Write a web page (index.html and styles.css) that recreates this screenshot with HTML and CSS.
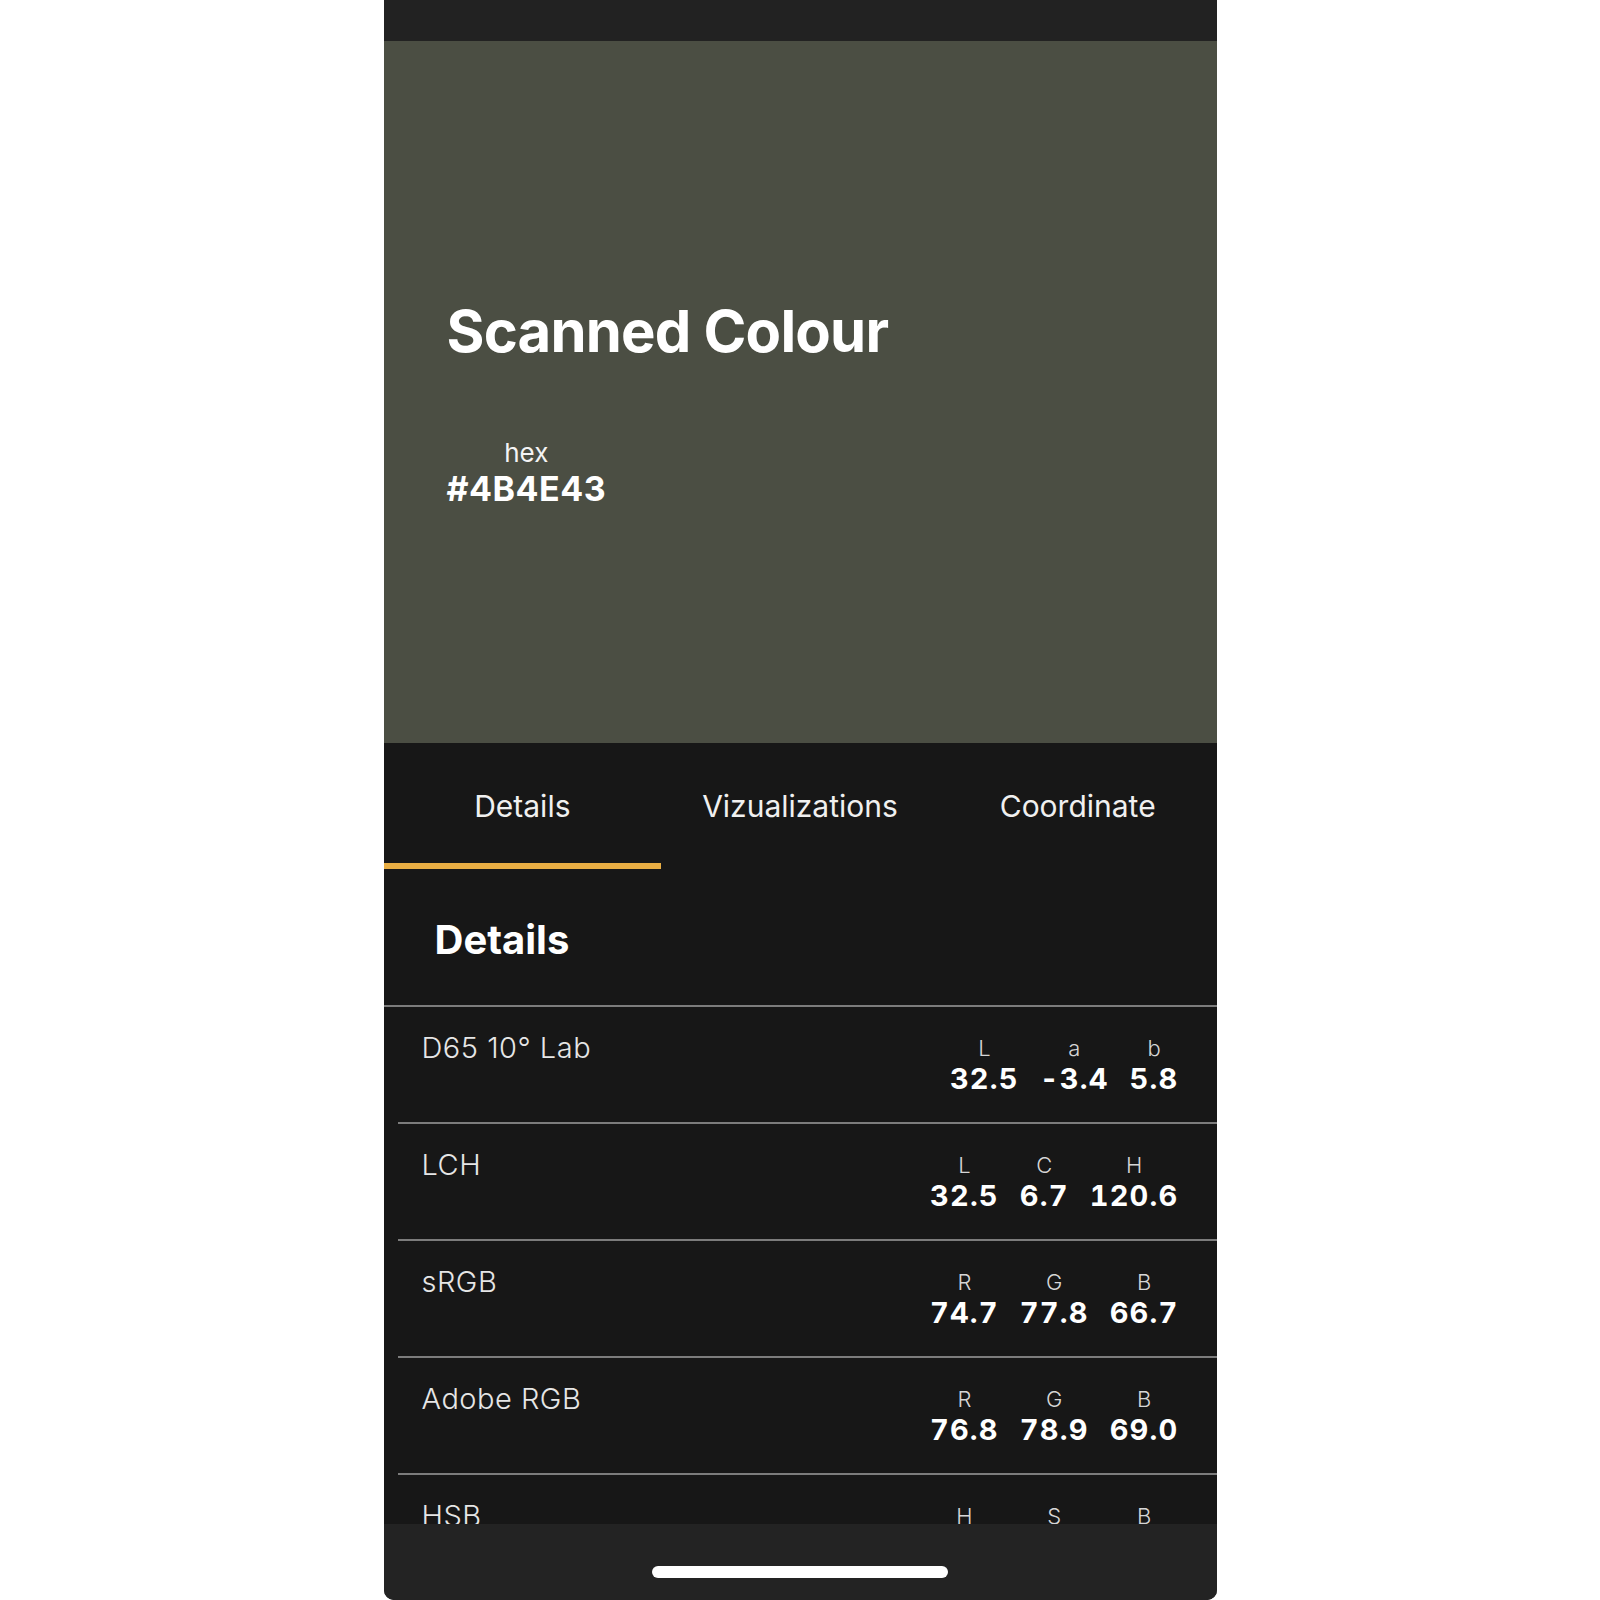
FILE: index.html
```html
<!DOCTYPE html>
<html lang="en">
<head>
<meta charset="utf-8">
<title>Scanned Colour</title>
<link rel="stylesheet" href="styles.css">
</head>
<body>
<div class="phone">
  <div class="statusbar"></div>
  <section class="swatch">
    <h1 class="title">Scanned Colour</h1>
    <div class="hex">
      <span class="hex-label">hex</span>
      <span class="hex-value">#4B4E43</span>
    </div>
  </section>
  <nav class="tabs">
    <div class="tab active">Details</div>
    <div class="tab">Vizualizations</div>
    <div class="tab">Coordinate</div>
  </nav>
  <div class="heading"><h2>Details</h2></div>
  <div class="rows">
    <div class="row">
      <div class="row-label">D65 10° Lab</div>
      <div class="vals">
        <div class="val"><span class="k">L</span><span class="v">32.5</span></div>
        <div class="val"><span class="k">a</span><span class="v">-3.4</span></div>
        <div class="val"><span class="k">b</span><span class="v">5.8</span></div>
      </div>
    </div>
    <div class="row">
      <div class="row-label">LCH</div>
      <div class="vals">
        <div class="val"><span class="k">L</span><span class="v">32.5</span></div>
        <div class="val"><span class="k">C</span><span class="v">6.7</span></div>
        <div class="val"><span class="k">H</span><span class="v">120.6</span></div>
      </div>
    </div>
    <div class="row">
      <div class="row-label">sRGB</div>
      <div class="vals">
        <div class="val"><span class="k">R</span><span class="v">74.7</span></div>
        <div class="val"><span class="k">G</span><span class="v">77.8</span></div>
        <div class="val"><span class="k">B</span><span class="v">66.7</span></div>
      </div>
    </div>
    <div class="row">
      <div class="row-label">Adobe RGB</div>
      <div class="vals">
        <div class="val"><span class="k">R</span><span class="v">76.8</span></div>
        <div class="val"><span class="k">G</span><span class="v">78.9</span></div>
        <div class="val"><span class="k">B</span><span class="v">69.0</span></div>
      </div>
    </div>
    <div class="row">
      <div class="row-label">HSB</div>
      <div class="vals">
        <div class="val"><span class="k">H</span><span class="v">76.4</span></div>
        <div class="val"><span class="k">S</span><span class="v">14.1</span></div>
        <div class="val"><span class="k">B</span><span class="v">30.6</span></div>
      </div>
    </div>
  </div>
  <div class="homebar"><div class="indicator"></div></div>
</div>
</body>
</html>
```

FILE: styles.css
```css
* { box-sizing: border-box; }
html, body { margin: 0; padding: 0; background: #ffffff; }
body { font-family: Inter, "Noto Sans", "Liberation Sans", sans-serif; color: #f2f2f2; }

.phone {
  position: relative;
  width: 833px;
  height: 1600px;
  margin: 0 auto;
  background: #171717;
  overflow: hidden;
  border-radius: 0 0 10px 10px;
}

.statusbar { height: 41px; background: #222222; }

.swatch {
  height: 702px;
  background: #4B4E43;
  padding: 255px 0 0 63px;
}
.title {
  margin: 0;
  font-size: 58px;
  line-height: 70px;
  font-weight: 700;
  letter-spacing: -0.8px;
  color: #ffffff;
}
.hex {
  display: inline-flex;
  flex-direction: column;
  align-items: center;
  margin-top: 71px;
}
.hex-label { font-size: 26px; line-height: 32px; font-weight: 400; color: #f4f4f4; }
.hex-value { font-size: 34px; line-height: 40px; font-weight: 700; color: #ffffff; letter-spacing: 0.5px; }

.tabs { display: flex; height: 126px; background: #171717; }
.tab {
  flex: 1;
  text-align: center;
  padding-top: 45px;
  font-size: 30px;
  line-height: 36px;
  font-weight: 400;
  color: #f0f0f0;
  border-bottom: 6px solid transparent;
}
.tab.active { border-bottom-color: #E9AE44; }

.heading {
  height: 138px;
  padding: 47px 0 0 51px;
  border-bottom: 2px solid #7c7c7c;
}
.heading h2 {
  margin: 0;
  font-size: 40px;
  line-height: 48px;
  font-weight: 700;
  color: #ffffff;
}

.rows { padding-left: 14px; }
.row {
  display: flex;
  justify-content: space-between;
  align-items: flex-start;
  height: 117px;
  padding: 24px 38px 0 24px;
  border-bottom: 2px solid #7c7c7c;
}
.row-label {
  font-size: 29px;
  line-height: 34px;
  font-weight: 300;
  letter-spacing: 0.5px;
  color: #e6e6e6;
}
.vals { display: flex; gap: 21px; margin-top: 4px; }
.val { display: flex; flex-direction: column; align-items: center; }
.k { font-size: 22px; line-height: 27px; font-weight: 300; color: #d6d6d6; }
.v {
  font-size: 29px;
  line-height: 34px;
  font-weight: 700;
  letter-spacing: 1.2px;
  font-variant-numeric: tabular-nums;
  color: #ffffff;
}

.homebar {
  position: absolute;
  left: 0;
  right: 0;
  bottom: 0;
  height: 76px;
  background: #232323;
  display: flex;
  justify-content: center;
  padding-top: 42px;
}
.indicator { width: 296px; height: 12px; border-radius: 6px; background: #ffffff; }
```
